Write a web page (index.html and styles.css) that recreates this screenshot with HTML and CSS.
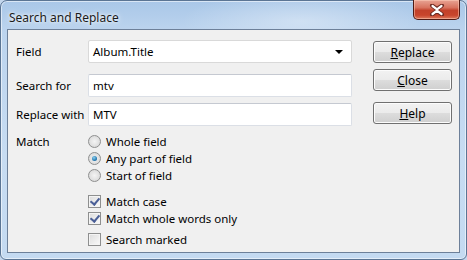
FILE: index.html
```html
<!DOCTYPE html>
<html>
<head>
<meta charset="utf-8">
<link rel="stylesheet" href="styles.css">
</head>
<body>
<div class="window">
  <div class="titlebar">
    <span class="title">Search and Replace</span>
    <button class="close-btn" aria-label="Close">
      <svg width="16" height="12" viewBox="0 0 16 12">
        <path d="M3 1.5 L8 5 L13 1.5 M3 10.5 L8 7 L13 10.5" fill="none" stroke="#6b2a22" stroke-width="4" stroke-linecap="round" stroke-linejoin="round"/>
        <path d="M3.5 2 L8 5.3 L12.5 2 M3.5 10 L8 6.7 L12.5 10" fill="none" stroke="#fff" stroke-width="2.2" stroke-linecap="round" stroke-linejoin="round"/>
      </svg>
    </button>
  </div>
  <div class="client">
    <div class="form">
      <div class="row row-field">
        <label class="lbl">Field</label>
        <div class="combo">
          <span>Album.Title</span>
          <span class="arrow"></span>
        </div>
      </div>
      <div class="row row-search">
        <label class="lbl">Search for</label>
        <div class="textbox">mtv</div>
      </div>
      <div class="row row-replace">
        <label class="lbl">Replace with</label>
        <div class="textbox">MTV</div>
      </div>
      <div class="match">
        <div class="lbl match-lbl">Match</div>
        <div class="options">
          <div class="opt"><span class="radio"></span>Whole field</div>
          <div class="opt"><span class="radio on"></span>Any part of field</div>
          <div class="opt"><span class="radio"></span>Start of field</div>
          <div class="opt chk-first"><span class="check on"></span>Match case</div>
          <div class="opt"><span class="check on"></span>Match whole words only</div>
          <div class="opt chk-last"><span class="check"></span>Search marked</div>
        </div>
      </div>
    </div>
    <div class="buttons">
      <button class="btn btn-replace"><u>R</u>eplace</button>
      <button class="btn btn-close"><u>C</u>lose</button>
      <button class="btn btn-help"><u>H</u>elp</button>
    </div>
  </div>
</div>
</body>
</html>
```

FILE: styles.css
```css
* { box-sizing: border-box; }
html, body { margin: 0; padding: 0; background: #c3d6ec; }
body { font-family: "Noto Sans", "DejaVu Sans", sans-serif; font-size: 11.5px; color: #000; }

.window {
  width: 467px;
  height: 260px;
  border: 1px solid #5b7594;
  border-radius: 7px 7px 6px 6px;
  padding: 0 6px 6px 6px;
  background:
    radial-gradient(ellipse 120px 30px at 300px 20px, rgba(255,255,255,0.35), rgba(255,255,255,0)),
    linear-gradient(180deg, #a9c7e8 0px, #bcd4ee 30px, #c7dcf2 60%, #c4daf1 100%);
  box-shadow: inset 0 0 0 1px rgba(255,255,255,0.55);
  display: flex;
  flex-direction: column;
}

.titlebar {
  height: 28px;
  flex: none;
  display: flex;
  align-items: flex-start;
  justify-content: space-between;
}
.title {
  margin: 8px 0 0 2px;
  font-size: 12px;
  color: #1b1b1b;
  text-shadow: 0 0 6px rgba(255,255,255,0.9), 0 0 3px rgba(255,255,255,0.9);
}
.close-btn {
  width: 47px;
  height: 20px;
  margin: -1px 0 0 0;
  padding: 0;
  border: 1px solid #4e1a14;
  border-top: none;
  border-radius: 0 0 5px 5px;
  background: linear-gradient(180deg, #e8a494 0%, #d8735f 40%, #c2412a 55%, #c8452c 80%, #dc7a5e 100%);
  box-shadow: inset 0 0 0 1px rgba(255,210,190,0.5);
  display: flex;
  align-items: center;
  justify-content: center;
}
.close-btn svg { display: block; }

.client {
  flex: 1;
  background: #f0f0f0;
  border: 1px solid #6d8099;
  display: flex;
  padding: 10px 0 0 8px;
}

.form { width: 336px; flex: none; }

.row { display: flex; align-items: center; height: 23px; }
.row-search { margin-top: 11px; }
.row-replace { margin-top: 6px; }
.lbl { width: 72px; flex: none; }

.combo, .textbox {
  width: 264px;
  height: 23px;
  background: #fff;
  border: 1px solid #dbdfe6;
  border-top-color: #c5c9d1;
  border-radius: 2px;
  display: flex;
  align-items: center;
  padding-left: 4px;
}
.combo { justify-content: space-between; padding-right: 8px; border-color: #d9d9d9; }
.arrow {
  width: 0; height: 0;
  border-left: 4px solid transparent;
  border-right: 4px solid transparent;
  border-top: 4px solid #000;
}

.match { display: flex; margin-top: 7px; }
.match-lbl { line-height: 17px; }
.options { display: flex; flex-direction: column; }
.opt { display: flex; align-items: center; height: 17px; gap: 5px; }
.chk-first { margin-top: 9px; }
.chk-last { margin-top: 4px; }

.radio {
  width: 13px; height: 13px;
  border-radius: 50%;
  border: 1px solid #8e8f8f;
  background: radial-gradient(circle at 50% 50%, #f4f4f4 0, #e0e0e0 60%, #d0d0d0 100%);
  position: relative;
  flex: none;
}
.radio.on::after {
  content: "";
  position: absolute;
  left: 3px; top: 3px;
  width: 5px; height: 5px;
  border-radius: 50%;
  background: radial-gradient(circle at 40% 35%, #8cd0f0, #1a6fa8 70%, #0d4d80);
}
.check {
  width: 13px; height: 13px;
  border: 1px solid #8e8f8f;
  background: linear-gradient(135deg, #dcdcdc, #fafafa);
  box-shadow: inset 0 0 0 1px #f4f4f4;
  position: relative;
  flex: none;
}
.check.on::after {
  content: "";
  position: absolute;
  left: 3px; top: 0px;
  width: 4px; height: 7px;
  border: solid #4a5f97;
  border-width: 0 2px 2px 0;
  transform: rotate(40deg);
}

.buttons {
  display: flex;
  flex-direction: column;
  margin-left: 21px;
}
.btn {
  width: 79px;
  height: 22px;
  border: 1px solid #707070;
  border-radius: 3px;
  background: linear-gradient(180deg, #f2f2f2 0%, #ebebeb 49%, #dddddd 50%, #cfcfcf 100%);
  box-shadow: inset 0 0 0 1px #fcfcfc;
  font-family: inherit;
  font-size: 12px;
  color: #000;
  padding: 0;
}
.btn-replace { margin-top: 1px; }
.btn-close { margin-top: 6px; }
.btn-help { margin-top: 11px; }
```
